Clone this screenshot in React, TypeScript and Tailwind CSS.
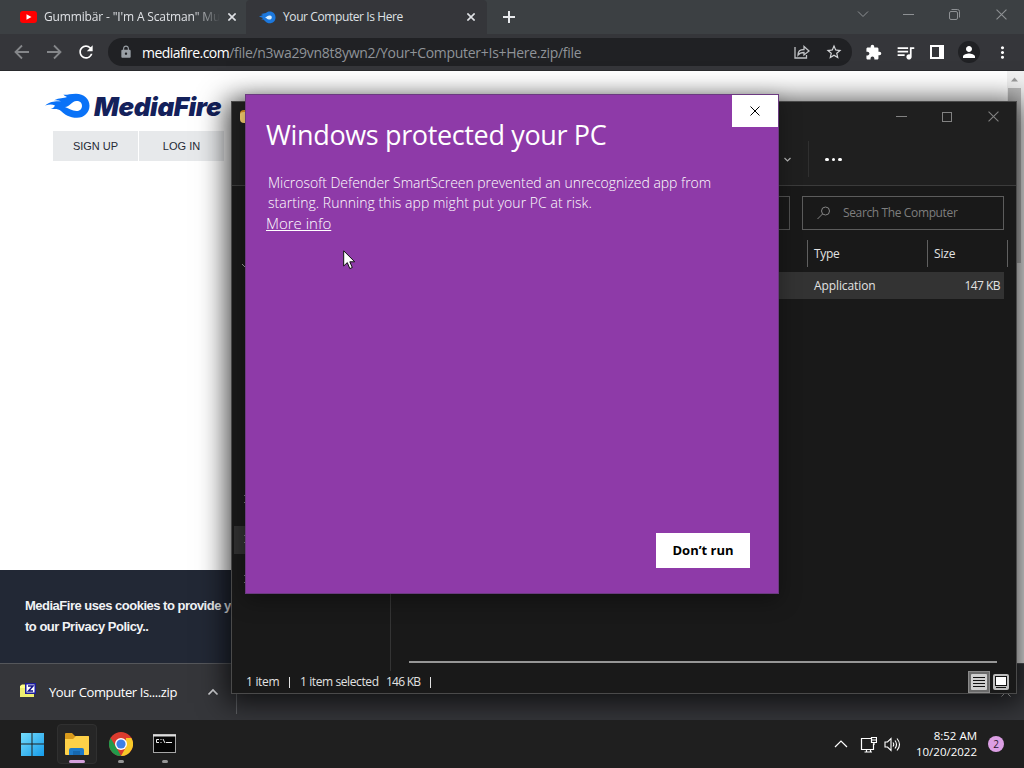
import React from 'react';
import { MdLock, MdStarBorder, MdQueueMusic, MdPerson, MdMoreVert, MdExtension, MdRefresh } from 'react-icons/md';

const CloseIcon = ({ size = 10, className = '' }: { size?: number; className?: string }) => (
  <svg width={size} height={size} viewBox="0 0 10 10" className={className} fill="none" stroke="currentColor">
    <path d="M0.5 0.5L9.5 9.5M9.5 0.5L0.5 9.5" />
  </svg>
);

const Arrow = ({ flip = false }: { flip?: boolean }) => (
  <svg width="16" height="16" viewBox="0 0 16 16" className={flip ? 'rotate-180' : ''} fill="none" stroke="#85878a" strokeWidth="1.8">
    <path d="M15 8H2M8 1.5L1.5 8L8 14.5" />
  </svg>
);

const Flame = ({ width, height }: { width: number; height: number }) => (
  <svg width={width} height={height} viewBox="0 0 45 25" fill="none">
    <path
      d="M0 12.5C6 8 10 8 16 8.2C14 7.4 11.5 7 9 7.3C15 4.5 18 5.5 22 4C20 3 19 2.5 18.5 1.5C21 2.6 24 .7 31 .7C39 .7 44.5 6 44.5 12.7C44.5 19.5 39 24.8 32 24.8C24.5 24.8 19.5 21.5 16 18C12.500 14.5 7 16.500 5.500 16C8 15.500 9 14.500 10 12.500C7 11 4 11.400 0 12.500Z"
      fill="#0a72f7"
    />
    <path d="M20 14C25 14 26.500 8 31.500 8C35 8 37 10 37 12.900C37 16 34.500 18 31.500 18C27 18 24 15.500 20 14Z" fill="#fff" />
  </svg>
);

const TabStrip = () => (
  <div className="flex h-[34px] bg-[#3c4043] text-[12px] text-[#dfe1e5]">
    <div className="flex w-[246px] items-center pl-5">
      <svg width="17" height="12" viewBox="0 0 17 12">
        <rect width="17" height="12" rx="3" fill="#f00" />
        <path d="M6.500 3.300L11.500 6L6.500 8.700Z" fill="#fff" />
      </svg>
      <div className="ml-[7px] w-[176px] overflow-hidden whitespace-nowrap tracking-[-0.15px] [mask-image:linear-gradient(to_right,#000_150px,transparent_176px)]">
        Gummibär - "I'm A Scatman" Mu
      </div>
      <CloseIcon size={8} className="ml-[8px] stroke-2" />
    </div>
    <div className="flex w-[241px] items-center rounded-t bg-[#35363a] pl-[13px]">
      <svg width="17" height="13" viewBox="0 0 17 13">
        <path d="M0 5.500L4 4L2 3L7 2C8 0 16 -1 16.500 6C17 13 9 14 6 10C5 9 4 8 2 9L4 7Z" fill="#1c78dd" />
        <path d="M6 6.500C8 6 9 4 11 4.500C14 5 13 9 10 8.500C8 8.500 8 7 6 6.500Z" fill="#d8efff" />
      </svg>
      <div className="ml-[7px] w-[176px] whitespace-nowrap tracking-[-0.4px]">Your Computer Is Here</div>
      <CloseIcon size={8} className="ml-[8px] stroke-2" />
    </div>
    <div className="flex flex-1 items-center pl-4">
      <svg width="12" height="12" viewBox="0 0 12 12" stroke="#e8eaed" strokeWidth="2">
        <path d="M6 0V12M0 6H12" />
      </svg>
    </div>
    <div className="flex w-[169px] items-start pt-[9px] text-[#8e9194]">
      <svg width="12" height="10" viewBox="0 0 12 10" className="ml-0.5" fill="none" stroke="currentColor">
        <path d="M1 2.500L6 7.500L11 2.500" />
      </svg>
      <svg width="12" height="10" viewBox="0 0 12 10" className="ml-[34px]" stroke="currentColor">
        <path d="M0 5.500H11" />
      </svg>
      <svg width="11" height="11" viewBox="0 0 11 11" className="ml-[34px]" fill="none" stroke="currentColor">
        <rect x="0.500" y="2.500" width="8" height="8" rx="1.500" />
        <path d="M2.500 .5H8.500Q10.500 .5 10.500 2.500V8.500" />
      </svg>
      <CloseIcon size={11} className="ml-[36px]" />
    </div>
  </div>
);

const Toolbar = () => (
  <div className="flex h-9 items-center bg-[#35363a] pl-[14px] text-white">
    <Arrow />
    <div className="ml-4">
      <Arrow flip />
    </div>
    <MdRefresh size={20} className="ml-[14px]" />
    <div className="ml-[12px] flex h-7 w-[744px] items-center rounded-full bg-[#202124] pl-[11px] text-[14px]">
      <MdLock size={14} className="text-[#9aa0a6]" />
      <div className="ml-[9px] w-[640px] whitespace-nowrap tracking-[-0.55px]">
        mediafire.com<span className="tracking-[-0.29px] text-[#8f9398]">/file/n3wa29vn8t8ywn2/Your+Computer+Is+Here.zip/file</span>
      </div>
      <svg width="16" height="14" viewBox="0 0 16 14" className="ml-[12px]" fill="none" stroke="#c0c2c5" strokeWidth="1.300">
        <path d="M1 2V13H12.500V10M4 10C4 6 6 4.500 10 4.500V1.500L15 6L10 10V7.500C7 7.500 5.500 8 4 10Z" />
      </svg>
      <MdStarBorder size={18} className="ml-[15px] text-[#d4d6d9]" />
    </div>
    <MdExtension size={17} className="ml-[13px]" />
    <MdQueueMusic size={21} className="ml-[13px]" />
    <svg width="14" height="14" viewBox="0 0 14 14" className="ml-[14px]">
      <path d="M0 0H14V14H0ZM2 2V12H9V2Z" fill="#fff" fillRule="evenodd" />
    </svg>
    <div className="ml-[14px] flex h-[22px] w-[22px] items-center justify-center rounded-full bg-[#202124]">
      <MdPerson size={18} />
    </div>
    <MdMoreVert size={19} className="ml-[13px]" />
  </div>
);

const Page = () => (
  <div className="flex h-[593px] border-t border-[#292a2d] bg-white">
    <div className="flex w-[1007px] flex-col justify-between">
      <div>
        <div className="flex items-center pl-[45px] pt-[22px]">
          <Flame width={45} height={25} />
          <div className="ml-[4px] mt-[3px] font-[Inter] text-[26px] font-black italic leading-[22px] tracking-[-0.4px] text-[#14215b]">MediaFire</div>
        </div>
        <div className="ml-[53px] mt-[13px] flex h-[30px] gap-px font-['Liberation_Sans'] text-[11px] text-[#252a35]">
          <button className="w-[85px] bg-[#e7e9eb]">SIGN UP</button>
          <button className="w-[85px] bg-[#e7e9eb]">LOG IN</button>
        </div>
      </div>
      <div className="h-[93px] bg-[#222835] pl-[25px] pt-[25px] font-['Liberation_Sans'] text-[13px] font-bold leading-[21px] tracking-[-0.5px] text-[#f1f3f5]">
        <div className="whitespace-nowrap">MediaFire uses cookies to provide you with a great user experience.</div>
        <div>to our Privacy Policy..</div>
      </div>
    </div>
    <div className="flex w-[17px] flex-col items-center bg-[#f1f1f1] pr-0.5 pt-[6px]">
      <svg width="7" height="5" viewBox="0 0 7 5" className="shrink-0">
        <path d="M0 4.500L3.500 .5L7 4.500Z" fill="#9a9a9a" />
      </svg>
      <div className="mt-[6px] h-[175px] w-[13px] shrink-0 bg-[#bcbcbc]" />
    </div>
  </div>
);

const DownloadShelf = () => (
  <div className="flex h-[57px] items-center border-t border-[#55575b] bg-[#35363a] pl-5">
    <svg width="16" height="16" viewBox="0 0 16 16" className="-mt-1">
      <path d="M0 4L2 2.500H6L7 4V15H0Z" fill="#ffff84" />
      <path d="M0 6H14V15H0Z" fill="#eeee70" />
      <rect x="5.750" y="1.750" width="9.500" height="9.500" fill="#fff" stroke="#1c1c9c" strokeWidth="1.500" />
      <path d="M8 4H13L8.500 9H13" fill="none" stroke="#111188" strokeWidth="1.500" />
    </svg>
    <div className="ml-[13px] mt-0.5 w-[150px] whitespace-nowrap text-[13px] tracking-[-0.4px] text-white">Your Computer Is....zip</div>
    <svg width="12" height="8" viewBox="0 0 12 8" className="ml-[8px]" fill="none" stroke="#d0d1d4" strokeWidth="1.700">
      <path d="M1.500 6.500L6 2L10.500 6.500" />
    </svg>
    <div className="ml-[17px] h-[44px] w-px bg-[#5f6165]" />
    <CloseIcon size={10} className="ml-auto mr-[13px] text-[#c0c0c0]" />
  </div>
);

const Browser = () => (
  <div className="flex h-[720px] flex-col">
    <TabStrip />
    <Toolbar />
    <Page />
    <DownloadShelf />
  </div>
);

const NavMark = () => (
  <svg width="4" height="12" viewBox="0 0 4 12" fill="none" stroke="#77777a">
    <path d="M0 1L3 4M0 8L3 11M2 6H3" />
  </svg>
);

const Explorer = () => (
  <div className="absolute left-[231px] top-[101px] flex h-[593px] w-[786px] flex-col border border-[#4a4a4a] bg-[#191919] text-[12px] text-[#e2e2e2] shadow-[0_4px_26px_5px_rgba(0,0,0,0.7)]">
    <div className="h-[84px] shrink-0 border-b border-[#3b3b3b] bg-[#1f1f1f]">
      <div className="flex h-[29px] items-center text-[#828282]">
        <div className="ml-2 h-[13px] w-4 rounded-sm border-t-2 border-[#d88c22] bg-[#f7ce70]" />
        <svg width="11" height="11" viewBox="0 0 11 11" className="ml-[640px]" stroke="currentColor">
          <path d="M0 5.500H11" />
        </svg>
        <div className="ml-[35px] h-[10px] w-[10px] border border-[#828282]" />
        <CloseIcon size={11} className="ml-[36px]" />
      </div>
      <div className="flex h-[56px] items-center pl-[552px]">
        <svg width="7" height="5" viewBox="0 0 7 5" fill="none" stroke="#b5b5b5" strokeWidth="1.200">
          <path d="M.5 1L3.500 4L6.500 1" />
        </svg>
        <div className="ml-[17px] h-9 w-px bg-[#303030]" />
        <div className="ml-4 flex gap-[3px]">
          <i className="h-[3px] w-[3.5px] rounded-full bg-white" />
          <i className="h-[3px] w-[3.5px] rounded-full bg-white" />
          <i className="h-[3px] w-[3.5px] rounded-full bg-white" />
        </div>
      </div>
    </div>
    <div className="flex h-[54px] shrink-0 items-center gap-3 pl-[100px]">
      <div className="h-[34px] w-[458px] border border-[#515151]" />
      <div className="flex h-[34px] w-[202px] items-center border border-[#5c5c5c] pl-[14px] tracking-[-0.37px] text-[#7e7e7e]">
        <svg width="14" height="14" viewBox="0 0 14 14" fill="none" stroke="#858585">
          <circle cx="8.500" cy="5" r="4" />
          <path d="M5.500 8L.5 13" />
        </svg>
        <span className="ml-3 whitespace-nowrap">Search The Computer</span>
      </div>
    </div>
    <div className="flex min-h-0 flex-1">
      <div className="flex w-[159px] flex-col border-r border-[#343434]">
        <svg width="6" height="6" viewBox="0 0 6 6" className="ml-[10px] mt-6" fill="none" stroke="#999">
          <path d="M0 0L5 5" />
        </svg>
        <div className="mt-[224px] flex pl-[12px]"><NavMark /></div>
        <div className="ml-0.5 mt-[20px] flex h-7 items-center bg-[#303030] pl-[10px]"><NavMark /></div>
        <div className="mt-[20px] flex pl-[12px]"><NavMark /></div>
      </div>
      <div className="flex flex-1 flex-col">
        <div className="flex h-[27px] pl-[416px]">
          <div className="flex w-[120px] items-center border-l border-[#606060] pl-[6px] tracking-[-0.3px]">Type</div>
          <div className="flex w-[81px] items-center border-x border-[#606060] pl-[6px] tracking-[-0.2px]">Size</div>
        </div>
        <div className="mr-[12px] mt-[5px] flex h-[27px] items-center justify-between bg-[#333] pl-[423px] pr-1">
          <span className="tracking-[-0.1px]">Application</span>
          <span className="tracking-[-0.55px]">147 KB</span>
        </div>
        <div className="mb-[8px] ml-[18px] mr-[19px] mt-auto h-[2px] bg-[#969696]" />
      </div>
    </div>
    <div className="flex h-[22px] shrink-0 items-center pl-[14px]">
      <span className="w-[33px] whitespace-nowrap tracking-[-0.3px]">1 item</span>
      <i className="ml-[10px] h-[11px] w-px bg-[#e2e2e2]" />
      <span className="ml-[10px] w-[79px] whitespace-nowrap tracking-[-0.4px]">1 item selected</span>
      <span className="ml-[7px] w-[34px] whitespace-nowrap tracking-[-0.75px]">146 KB</span>
      <i className="ml-[10px] h-[11px] w-px bg-[#e2e2e2]" />
      <div className="ml-auto flex h-[22px] w-[22px] items-center justify-center border border-[#8a8a8a] bg-[#6b6b6b]">
        <svg width="16" height="16" viewBox="0 0 16 16">
          <rect width="16" height="16" rx="1" fill="#cfcfcf" />
          <path d="M2 3.500H14M2 6.500H14M2 9.500H14M2 12.500H14" stroke="#111" />
        </svg>
      </div>
      <svg width="16" height="16" viewBox="0 0 16 16" className="ml-[3px] mr-[7px]">
        <rect width="16" height="16" rx="2" fill="#bdbdbd" />
        <rect x="2.500" y="2.500" width="11" height="9" fill="#fff" stroke="#111" />
        <path d="M3 13.500H13" stroke="#111" />
      </svg>
    </div>
  </div>
);

const SmartScreenDialog = () => (
  <div className="absolute left-[245px] top-[94px] h-[500px] w-[534px] border border-[#6b3a80] bg-[#8e3aa8] text-white shadow-[0_6px_20px_rgba(0,0,0,0.35)]">
    <div className="flex items-start justify-between">
      <h1 className="ml-[20px] mt-[22px] whitespace-nowrap text-[27px] font-normal leading-[36px] tracking-[-0.36px]">Windows protected your PC</h1>
      <button className="flex h-8 w-[46px] items-center justify-center bg-white text-black">
        <CloseIcon size={10} />
      </button>
    </div>
    <p className="ml-[22px] mt-[20px] whitespace-nowrap text-[14px] font-light leading-5">
      <span className="tracking-[-0.03px]">Microsoft Defender SmartScreen prevented an unrecognized app from</span>
      <br />
      <span className="tracking-[0.04px]">starting. Running this app might put your PC at risk.</span>
    </p>
    <a className="ml-[20px] block w-fit whitespace-nowrap text-[15px] font-light leading-[20px] underline">More info</a>
    <button className="ml-[410px] mt-[300px] block h-[35px] w-[94px] bg-white text-[13px] font-bold text-black">Don’t run</button>
  </div>
);

const FolderIcon = () => (
  <svg width="26" height="24" viewBox="0 0 26 24">
    <path d="M1 2Q1 1 2 1H8L11 4H24Q25 4 25 5V12H1Z" fill="#d99a1b" />
    <path d="M1 7H9L12 4H24Q25 4 25 5V22Q25 23 24 23H2Q1 23 1 22Z" fill="#fed148" />
    <path d="M5 23V18Q5 16 7 16H18Q20 16 20 18V23Z" fill="#1f7ac7" />
    <path d="M9 19H16V23H9Z" fill="#1667ad" />
  </svg>
);

const ChromeIcon = () => (
  <svg width="24" height="24" viewBox="0 0 24 24">
    <circle cx="12" cy="12" r="12" fill="#db3b2e" />
    <path d="M1.600 6L7 15L12 24A12 12 0 0 1 1.600 6Z" fill="#21994b" />
    <path d="M22.400 6A12 12 0 0 1 12 24L17 15V6Z" fill="#f8c929" />
    <circle cx="12" cy="12" r="6" fill="#fff" />
    <circle cx="12" cy="12" r="4.600" fill="#3d7fe6" />
  </svg>
);

const Taskbar = () => (
  <div className="flex h-12 items-center bg-[#1f1f1f] text-white">
    <svg width="24" height="24" viewBox="0 0 24 24" className="ml-5">
      <defs>
        <linearGradient id="win" x1="0" y1="0" x2="1" y2="1">
          <stop offset="0" stopColor="#75dcfb" />
          <stop offset="1" stopColor="#159bea" />
        </linearGradient>
      </defs>
      <path d="M1 1H11.500V11.500H1ZM12.500 1H24V11.500H12.500ZM1 12.500H11.500V24H1ZM12.500 12.500H24V24H12.500Z" fill="url(#win)" />
    </svg>
    <div className="ml-[13px] flex h-10 w-10 flex-col items-center rounded border border-[#303030] bg-[#262626] pt-[7px]">
      <FolderIcon />
      <i className="mt-[4px] h-[3px] w-4 shrink-0 rounded-full bg-[#d5a0dc]" />
    </div>
    <div className="ml-[12px] flex h-10 flex-col items-center pt-[8px]">
      <ChromeIcon />
      <i className="mt-[4px] h-[3px] w-[6px] shrink-0 rounded-full bg-[#969696]" />
    </div>
    <div className="ml-5 flex h-10 flex-col items-center pt-[10px]">
      <svg width="23" height="19" viewBox="0 0 23 19">
        <rect x=".5" y=".5" width="22" height="18" fill="#050505" stroke="#a6a6a6" />
        <path d="M0 1.500H23" stroke="#dedede" strokeWidth="2" />
        <path d="M6 5.500H3.500V8.500H6M8 5V6M8 8V9M10 5L12 9M13 8.500H19" fill="none" stroke="#eee" />
      </svg>
      <i className="mt-[7px] h-[3px] w-[6px] shrink-0 rounded-full bg-[#969696]" />
    </div>
    <div className="ml-auto flex items-center">
      <svg width="14" height="8" viewBox="0 0 14 8" fill="none" stroke="#fff" strokeWidth="1.200">
        <path d="M1 7L7 1L13 7" />
      </svg>
      <svg width="17" height="17" viewBox="0 0 17 17" className="ml-[12px]" fill="none" stroke="#fff" strokeWidth="1.200">
        <path d="M11 2.500H1.500V13.500H13.500V7.500M4.500 16H12M6.500 13.500V16M10.500 13.500V16M11.500 1.500H16.500V6.500H11.500ZM12 4H16M14 6.500V9" />
      </svg>
      <svg width="17" height="15" viewBox="0 0 17 15" className="ml-[7px]" fill="none" stroke="#fff" strokeWidth="1.100">
        <path d="M1 5H3.500L7 1.500V13.500L3.500 10H1ZM9 5.500Q10.500 7.500 9 9.500M11 3.500Q14 7.500 11 11.500M13 1.500Q18 7.500 13 13.500" />
      </svg>
      <div className="ml-[14px] w-[62px] text-right text-[11.5px] leading-4">
        <div className="whitespace-nowrap">8:52 AM</div>
        <div className="whitespace-nowrap">10/20/2022</div>
      </div>
      <div className="ml-[11px] mr-5 flex h-4 w-4 items-center justify-center rounded-full bg-[#dc9fe4] text-[10px] text-[#2b1730]">2</div>
    </div>
  </div>
);

export default function App() {
  return (
    <div className="relative h-[768px] w-[1024px] overflow-hidden bg-[#1f1f1f] font-['Open_Sans',sans-serif]">
      <Browser />
      <Explorer />
      <div className="relative">
        <Taskbar />
      </div>
      <SmartScreenDialog />
      <svg width="13" height="20" viewBox="0 0 13 20" className="absolute left-[343px] top-[250px]">
        <path d="M.7 .8V16L4.300 12.600L6.800 18.600L9.300 17.500L6.800 11.800H11.700Z" fill="#fff" stroke="#111" />
      </svg>
    </div>
  );
}
